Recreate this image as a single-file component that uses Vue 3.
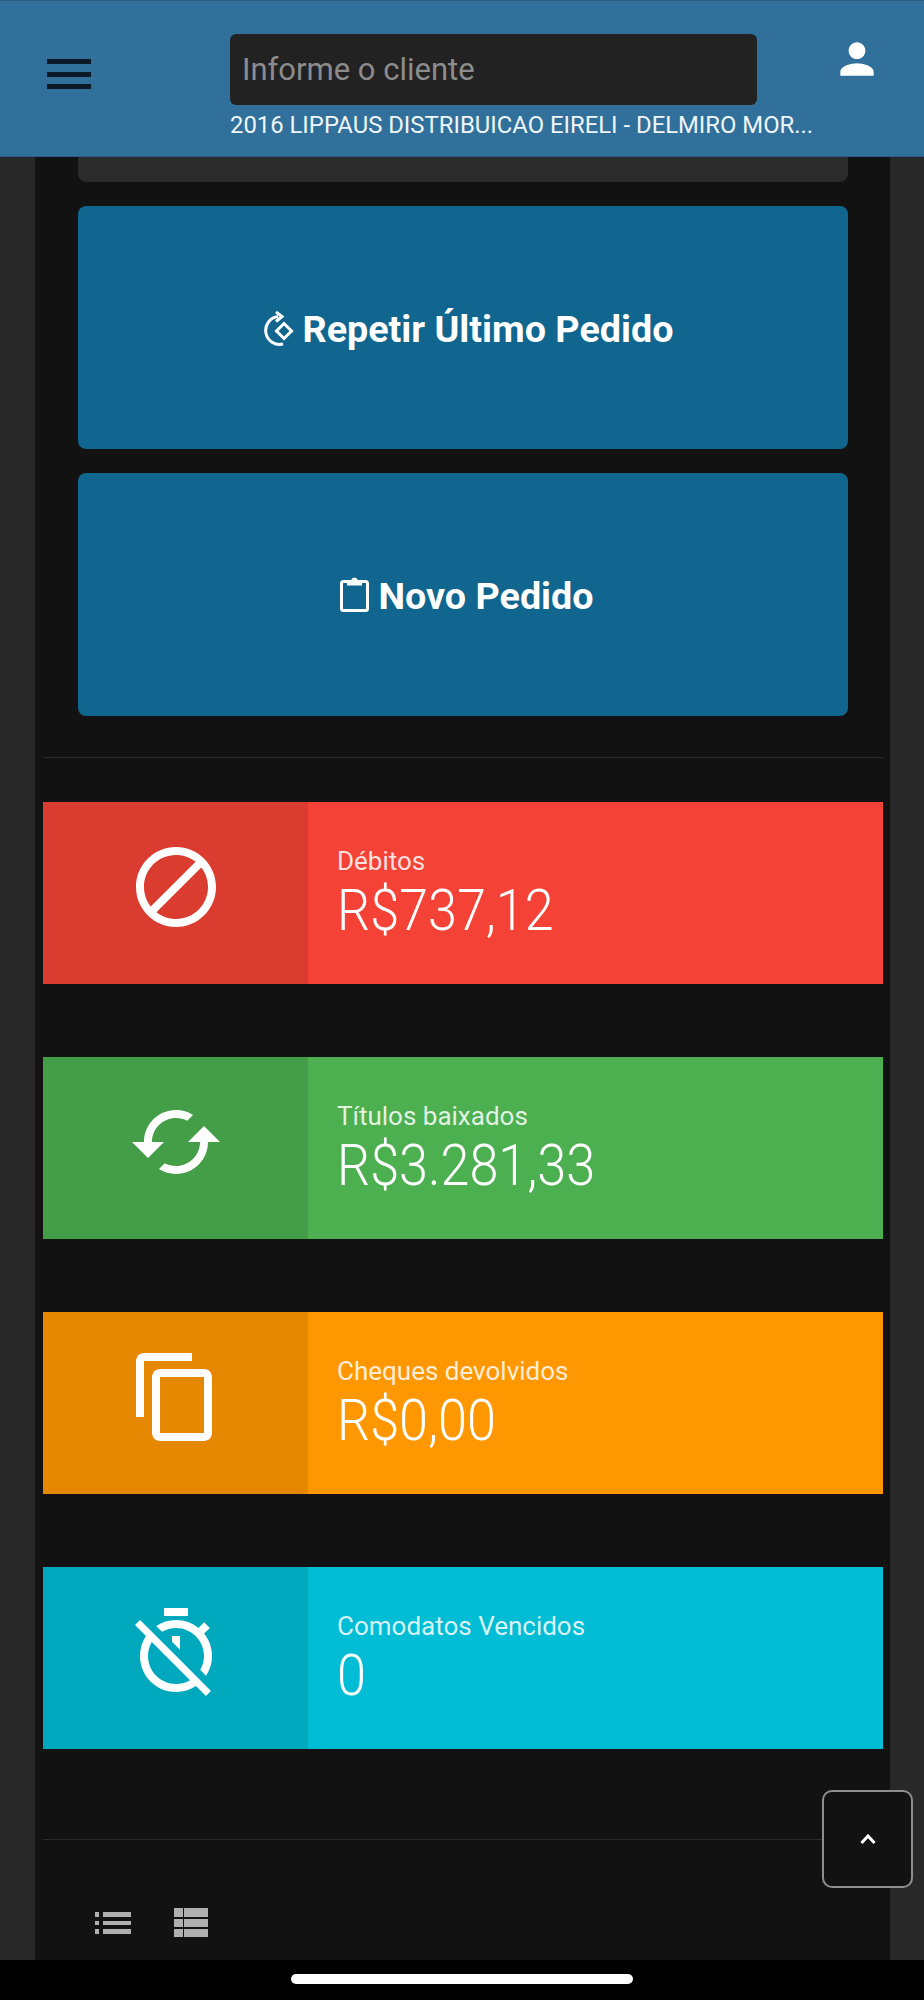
<template>
  <div class="screen">
    <header class="topbar">
      <button class="menu-btn" aria-label="Menu">
        <span></span>
        <span></span>
        <span></span>
      </button>
      <div class="client">
        <input class="client-input" type="text" placeholder="Informe o cliente" />
        <p class="client-name">2016 LIPPAUS DISTRIBUICAO EIRELI - DELMIRO MOR...</p>
      </div>
      <svg class="user-icon" viewBox="0 0 24 24">
        <path d="M12 12c2.21 0 4-1.79 4-4s-1.79-4-4-4-4 1.79-4 4 1.79 4 4 4zm0 2c-2.67 0-8 1.34-8 4v2h16v-2c0-2.66-5.33-4-8-4z" />
      </svg>
    </header>

    <main class="content">
      <div class="stub"></div>

      <a class="action">
        <svg class="repeat-icon" viewBox="0 0 33 35">
          <path class="line" d="M17 5.5A14 14 0 1 0 22 33" />
          <path class="line" d="M15 1l6 4.5-6 5" />
          <path class="line" d="M23 12.5l7.5 7.5-7.5 7.5-7.5-7.5z" />
        </svg>
        <span>Repetir Último Pedido</span>
      </a>
      <a class="action">
        <svg class="clip-icon" viewBox="0 0 29 36">
          <rect class="line" x="1.5" y="5.5" width="26" height="29" rx="2" />
          <path class="fill" d="M7 4h4.2a3.4 3.4 0 0 1 6.6 0H22v5.5H7z" />
        </svg>
        <span>Novo Pedido</span>
      </a>

      <hr class="rule first" />

      <div class="stats">
        <section v-for="stat in stats" :key="stat.label" class="stat" :class="stat.tone">
          <div class="stat-icon">
            <svg viewBox="0 0 24 24"><path :d="stat.icon" /></svg>
          </div>
          <div class="stat-text">
            <span class="stat-label">{{ stat.label }}</span>
            <span class="stat-value">{{ stat.value }}</span>
          </div>
        </section>
      </div>

      <hr class="rule second" />

      <div class="view-switch">
        <svg class="list-icon" viewBox="0 0 36 22">
          <rect x="0" y="0" width="4" height="5" />
          <rect x="8" y="0" width="28" height="5" />
          <rect x="0" y="9" width="4" height="4" />
          <rect x="8" y="9" width="28" height="4" />
          <rect x="0" y="17" width="4" height="5" />
          <rect x="8" y="17" width="28" height="5" />
        </svg>
        <svg class="table-icon" viewBox="0 0 34 29">
          <rect x="0" y="0" width="9" height="9" />
          <rect x="10" y="0" width="24" height="9" />
          <rect x="0" y="11" width="9" height="8" />
          <rect x="10" y="11" width="24" height="8" />
          <rect x="0" y="21" width="9" height="8" />
          <rect x="10" y="21" width="24" height="8" />
        </svg>
      </div>

      <button class="to-top" aria-label="Topo">
        <svg viewBox="0 0 16 10"><path d="M1.5 9L8 2l6.5 7" /></svg>
      </button>
    </main>

    <footer class="system-bar">
      <span class="home-pill"></span>
    </footer>
  </div>
</template>

<script setup>
const stats = [
  {
    label: 'Débitos',
    value: 'R$737,12',
    tone: 'red',
    icon: 'M12 2C6.48 2 2 6.48 2 12s4.48 10 10 10 10-4.48 10-10S17.52 2 12 2zM4 12c0-4.42 3.58-8 8-8 1.85 0 3.55.63 4.9 1.69L5.69 16.9C4.63 15.55 4 13.85 4 12zm8 8c-1.85 0-3.55-.63-4.9-1.69L18.31 7.1C19.37 8.45 20 10.15 20 12c0 4.42-3.58 8-8 8z'
  },
  {
    label: 'Títulos baixados',
    value: 'R$3.281,33',
    tone: 'green',
    icon: 'M19 8l-4 4h3c0 3.31-2.69 6-6 6-1.01 0-1.97-.25-2.8-.7l-1.46 1.46C8.97 19.54 10.43 20 12 20c4.42 0 8-3.58 8-8h3l-4-4zM6 12c0-3.31 2.69-6 6-6 1.01 0 1.97.25 2.8.7l1.46-1.46C15.03 4.46 13.57 4 12 4c-4.42 0-8 3.58-8 8H1l4 4 4-4H6z'
  },
  {
    label: 'Cheques devolvidos',
    value: 'R$0,00',
    tone: 'orange',
    icon: 'M16 1H4c-1.1 0-2 .9-2 2v14h2V3h12V1zm3 4H8c-1.1 0-2 .9-2 2v14c0 1.1.9 2 2 2h11c1.1 0 2-.9 2-2V7c0-1.1-.9-2-2-2zm0 16H8V7h11v14z'
  },
  {
    label: 'Comodatos Vencidos',
    value: '0',
    tone: 'cyan',
    icon: 'M19.04 4.55l-1.42 1.42C16.07 4.74 14.12 4 12 4c-1.83 0-3.53.55-4.95 1.48l1.46 1.46C9.53 6.35 10.73 6 12 6c3.87 0 7 3.13 7 7 0 1.27-.35 2.47-.94 3.49l1.45 1.45C20.45 16.53 21 14.83 21 13c0-2.12-.74-4.07-1.97-5.61l1.42-1.42-1.41-1.42zM15 1H9v2h6V1zm-4 8.44l2 2V8h-2v1.44zM3.02 4L1.75 5.27 4.5 8.03C3.55 9.45 3 11.16 3 13c0 4.97 4.03 9 9 9 1.84 0 3.55-.55 4.98-1.5l2.5 2.5 1.27-1.27-7.71-7.71L3.02 4zM12 20c-3.87 0-7-3.13-7-7 0-1.28.35-2.48.95-3.52l9.56 9.56c-1.04.61-2.23.96-3.51.96z'
  }
];
</script>

<style>
html,
body {
  margin: 0;
  background: #000;
}
</style>

<style scoped>
.screen {
  position: relative;
  display: flex;
  flex-direction: column;
  width: 924px;
  height: 2000px;
  overflow: hidden;
  background: #282828;
  font-family: Roboto, "Liberation Sans", sans-serif;
  color: #fff;
}

.topbar {
  display: flex;
  flex: none;
  align-items: flex-start;
  box-sizing: border-box;
  height: 157px;
  padding: 34px 0 0 47px;
  background: #31709a;
  box-shadow: inset 0 -1px 0 #2a5f82, inset 0 1px 0 #2a5f82;
}

.menu-btn {
  display: flex;
  flex: none;
  flex-direction: column;
  gap: 7.5px;
  width: 44px;
  margin: 25px 139px 0 0;
  padding: 0;
  border: 0;
  background: none;
}

.menu-btn span {
  height: 5px;
  background: #0b1a26;
}

.client {
  flex: none;
  width: 590px;
}

.client-input {
  display: block;
  box-sizing: border-box;
  width: 527px;
  height: 71px;
  padding: 0 12px;
  border: 0;
  border-radius: 6px;
  background: #222;
  color: #fff;
  font: 400 31px Roboto, sans-serif;
}

.client-input::placeholder {
  color: #8c8c8c;
  opacity: 1;
}

.client-name {
  margin: 7px 0 0;
  font-size: 23.85px;
  line-height: 26px;
  white-space: nowrap;
  color: #eef6fa;
}

.user-icon {
  flex: none;
  width: 50px;
  height: 50px;
  margin: 0 0 0 12px;
  fill: #fff;
}

.content {
  position: relative;
  flex: 1;
  box-sizing: border-box;
  margin: 0 34px 0 35px;
  padding: 0 7px 0 8px;
  background: #121212;
}

.stub {
  height: 25px;
  margin: 0 35px 24px;
  border-radius: 0 0 8px 8px;
  background: #2b2b2b;
}

.action {
  display: flex;
  align-items: center;
  justify-content: center;
  gap: 9px;
  box-sizing: border-box;
  height: 243px;
  margin: 0 35px 24px;
  padding: 2px 0 0 8px;
  border-radius: 8px;
  background: #10668e;
  font-size: 37.7px;
  font-weight: 700;
}

.repeat-icon {
  width: 33px;
  height: 35px;
}

.clip-icon {
  width: 29px;
  height: 36px;
  margin-top: -4px;
}

.line {
  fill: none;
  stroke: #fff;
  stroke-width: 3;
}

.fill {
  fill: #fff;
}

.rule {
  height: 1px;
  margin: 0;
  border: 0;
  background: #2b2b2b;
}

.rule.first {
  margin: 41px 0 44px;
}

.rule.second {
  margin-top: 90px;
}

.stats {
  display: grid;
  grid-auto-rows: 182px;
  row-gap: 73px;
}

.stat {
  display: flex;
}

.stat-icon {
  display: flex;
  flex: none;
  align-items: center;
  justify-content: center;
  width: 265px;
  background: rgba(0, 0, 0, 0.1);
}

.stat-icon svg {
  width: 96px;
  height: 96px;
  margin: 0 0 12px 1px;
  fill: #fff;
}

.stat-text {
  display: flex;
  flex-direction: column;
  padding: 44px 0 0 29px;
}

.stat-label {
  font-size: 26px;
  line-height: 30px;
  color: rgba(255, 255, 255, 0.85);
}

.stat-value {
  font-size: 57px;
  font-weight: 300;
  line-height: 70px;
  transform: scaleX(0.915);
  transform-origin: left center;
}

.red {
  background: #f44336;
}

.green {
  background: #4caf50;
}

.orange {
  background: #ff9800;
}

.cyan {
  background: #00bcd4;
}

.view-switch {
  display: flex;
  align-items: center;
  gap: 43px;
  margin-top: 68px;
  padding-left: 52px;
}

.list-icon {
  width: 36px;
  height: 22px;
  fill: #b0b0b0;
}

.table-icon {
  width: 34px;
  height: 29px;
  fill: #b0b0b0;
}

.to-top {
  position: absolute;
  top: 1633px;
  left: 787px;
  display: flex;
  align-items: center;
  justify-content: center;
  box-sizing: border-box;
  width: 91px;
  height: 98px;
  padding: 0;
  border: 2px solid #8e8e8e;
  border-radius: 10px;
  background: #121212;
}

.to-top svg {
  width: 16px;
  height: 10px;
  fill: none;
  stroke: #fff;
  stroke-width: 3;
}

.system-bar {
  display: flex;
  flex: none;
  justify-content: center;
  height: 40px;
  background: #000;
}

.home-pill {
  width: 342px;
  height: 10px;
  margin-top: 14px;
  border-radius: 5px;
  background: #fff;
}
</style>
